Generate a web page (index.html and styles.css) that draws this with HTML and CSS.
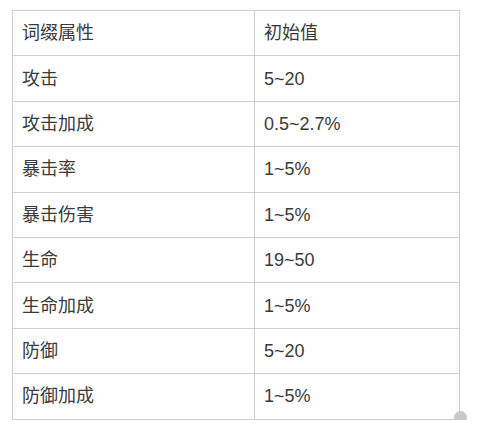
FILE: index.html
```html
<!DOCTYPE html>
<html lang="zh">
<head>
<meta charset="utf-8">
<link rel="stylesheet" href="styles.css">
</head>
<body>
<div class="wrap">
<table class="attr-table">
<tr><td class="c1">词缀属性</td><td class="c2">初始值</td></tr>
<tr><td class="c1">攻击</td><td class="c2">5~20</td></tr>
<tr><td class="c1">攻击加成</td><td class="c2">0.5~2.7%</td></tr>
<tr><td class="c1">暴击率</td><td class="c2">1~5%</td></tr>
<tr><td class="c1">暴击伤害</td><td class="c2">1~5%</td></tr>
<tr><td class="c1">生命</td><td class="c2">19~50</td></tr>
<tr><td class="c1">生命加成</td><td class="c2">1~5%</td></tr>
<tr><td class="c1">防御</td><td class="c2">5~20</td></tr>
<tr><td class="c1">防御加成</td><td class="c2">1~5%</td></tr>
</table>
<div class="dot"></div>
</div>
</body>
</html>
```
FILE: styles.css
```css
html, body {
  margin: 0;
  padding: 0;
  background: #ffffff;
}
body {
  font-family: "Liberation Sans", "Noto Sans CJK SC", sans-serif;
  color: #3a3a3a;
}
.wrap {
  position: relative;
  width: 448px;
  margin: 10px 0 0 12px;
}
.attr-table {
  border-collapse: collapse;
  width: 448px;
  table-layout: fixed;
}
.attr-table td {
  border: 1px solid #cfcfcf;
  height: 45.4px;
  padding: 0 9px;
  font-size: 18px;
  line-height: 20px;
  vertical-align: middle;
  box-sizing: border-box;
}
.attr-table .c1 {
  width: 242px;
}
.dot {
  position: absolute;
  left: 442px;
  top: 401px;
  width: 13px;
  height: 13px;
  border-radius: 50%;
  background: #c9c9c9;
  box-shadow: 0 1px 3px rgba(0,0,0,0.08);
  z-index: 2;
}
```
